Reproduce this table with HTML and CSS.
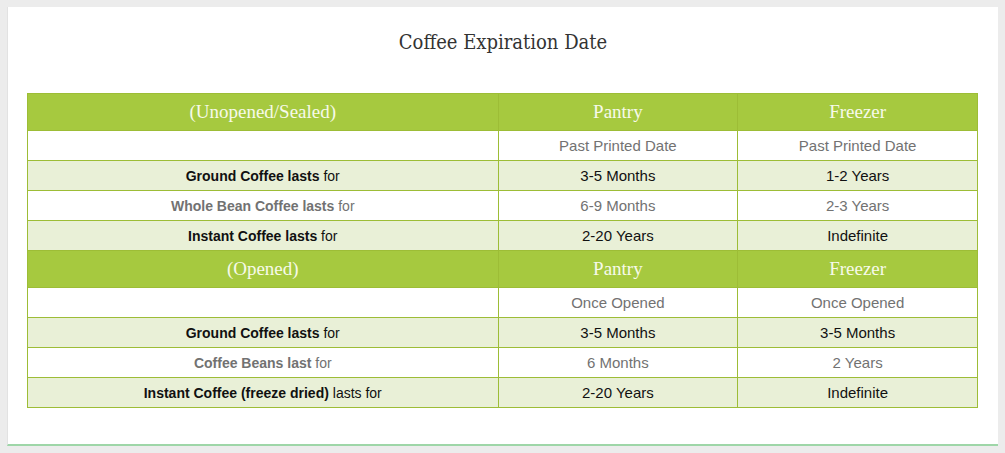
FILE: index.html
```html
<!DOCTYPE html>
<html>
<head>
<meta charset="utf-8">
<link rel="stylesheet" href="styles.css">
</head>
<body>
<div class="card">
  <h2 class="title">Coffee Expiration Date</h2>
  <table class="exp">
    <colgroup><col class="c1"><col class="c2"><col class="c3"></colgroup>
    <tr class="head"><th>(Unopened/Sealed)</th><th>Pantry</th><th>Freezer</th></tr>
    <tr class="w"><td></td><td>Past Printed Date</td><td>Past Printed Date</td></tr>
    <tr class="g"><td><b>Ground Coffee lasts</b> for</td><td>3-5 Months</td><td>1-2 Years</td></tr>
    <tr class="w"><td><b>Whole Bean Coffee lasts</b> for</td><td>6-9 Months</td><td>2-3 Years</td></tr>
    <tr class="g"><td><b>Instant Coffee lasts</b> for</td><td>2-20 Years</td><td>Indefinite</td></tr>
    <tr class="head"><th>(Opened)</th><th>Pantry</th><th>Freezer</th></tr>
    <tr class="w"><td></td><td>Once Opened</td><td>Once Opened</td></tr>
    <tr class="g"><td><b>Ground Coffee lasts</b> for</td><td>3-5 Months</td><td>3-5 Months</td></tr>
    <tr class="w"><td><b>Coffee Beans last</b> for</td><td>6 Months</td><td>2 Years</td></tr>
    <tr class="g"><td><b>Instant Coffee (freeze dried)</b> lasts for</td><td>2-20 Years</td><td>Indefinite</td></tr>
  </table>
</div>
</body>
</html>
```
FILE: styles.css
```css
html, body { margin: 0; padding: 0; }
body {
  background: #ececec;
  padding: 7px 7px 7px 7px;
  font-family: "Liberation Sans", Arial, sans-serif;
}
.card {
  background: #fff;
  border-left: 1px solid #e2e2e2;
  border-bottom: 2px solid #9ed6a8;
  box-sizing: border-box;
  height: 439px;
  padding: 0 19px 0 19px;
}
.title {
  margin: 0;
  padding-top: 22px;
  height: 86px;
  box-sizing: border-box;
  text-align: center;
  font-family: "DejaVu Serif Condensed", "Liberation Serif", serif;
  font-weight: normal;
  font-size: 20px;
  line-height: 26px;
  color: #333;
}
.exp {
  width: 951px;
  border-collapse: collapse;
  border: 1px solid #9dbd36;
  font-size: 15px;
}
.c1 { width: 471px; }
.c2 { width: 240px; }
.c3 { width: 240px; }
.exp th, .exp td {
  border: 1px solid #9dbd36;
  text-align: center;
  padding: 0;
}
.head th {
  background: #a6c93f;
  color: #f7faea;
  font-family: "Liberation Serif", serif;
  font-weight: normal;
  font-size: 19px;
  height: 36px;
}
.exp td { height: 29px; }
.exp td:first-child { font-size: 14px; }
.w td { background: #fff; color: #727272; }
.g td { background: #e9f0d7; color: #111; }
```
